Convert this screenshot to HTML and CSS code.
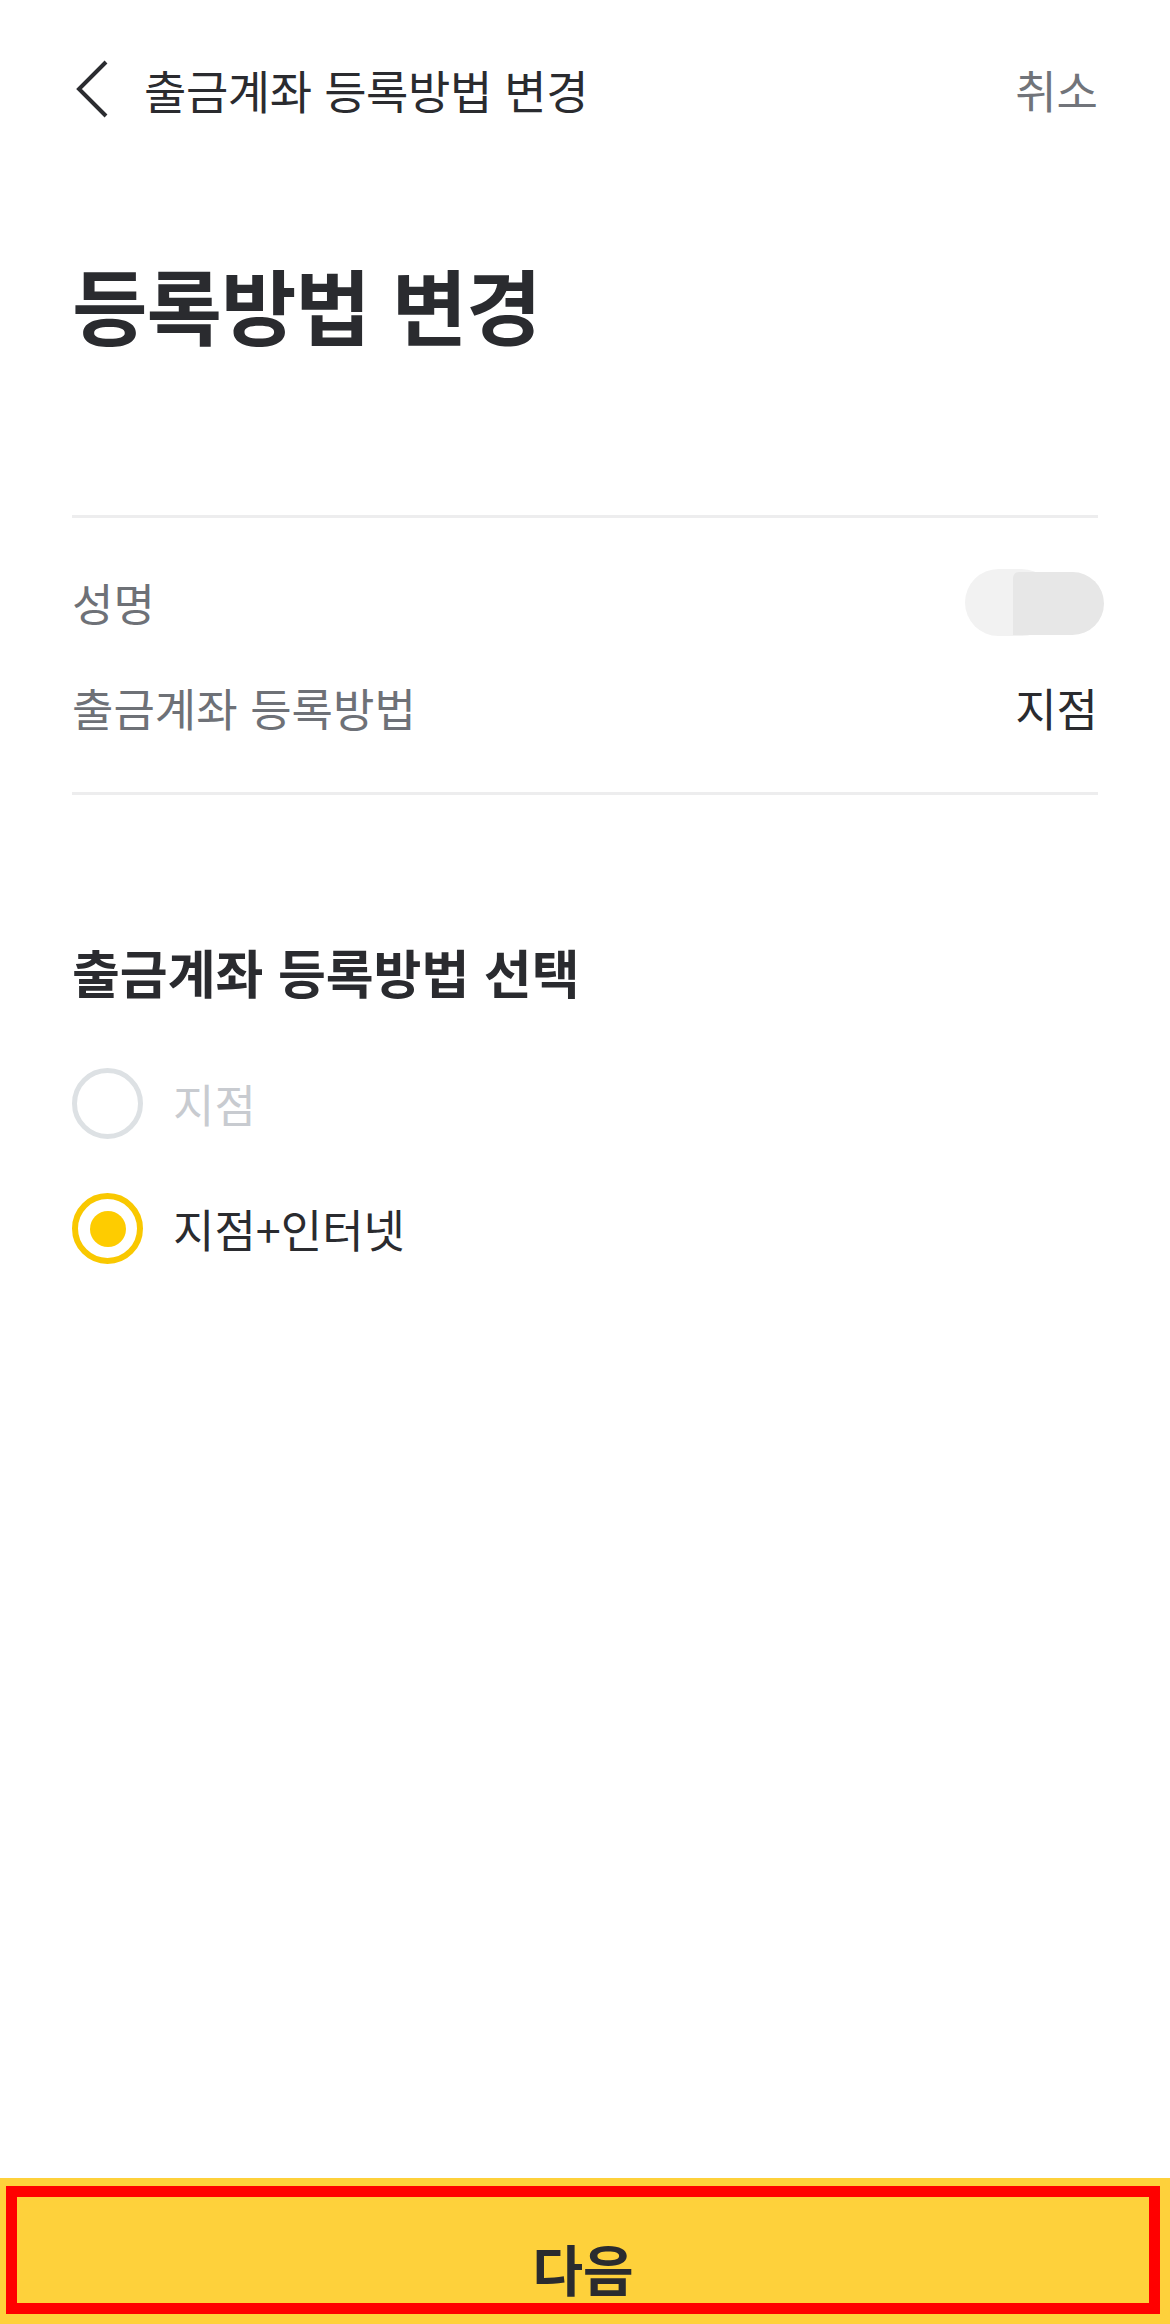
FILE: index.html
```html
<!DOCTYPE html>
<html lang="ko">
<head>
    <meta charset="UTF-8">
    <meta name="viewport" content="width=device-width, initial-scale=1.0">
    <title>출금계좌 등록방법 변경</title>
    <link rel="stylesheet" href="styles.css">
</head>
<body>
    <div class="page">
        <header class="top-bar">
            <button class="back-btn" aria-label="뒤로">
                <svg width="34" height="60" viewBox="0 0 34 60">
                    <polyline points="30,3 3,30 30,57" fill="none" stroke="#2b2c30" stroke-width="4" stroke-linejoin="miter"/>
                </svg>
            </button>
            <span class="top-title">출금계좌 등록방법 변경</span>
            <button class="cancel-btn">취소</button>
        </header>

        <main class="content">
            <h1 class="page-title">등록방법 변경</h1>

            <div class="info-list">
                <div class="info-row">
                    <span class="info-label">성명</span>
                    <span class="name-mask">
                        <span class="mask-left"></span>
                        <span class="mask-right"></span>
                    </span>
                </div>
                <div class="info-row">
                    <span class="info-label">출금계좌 등록방법</span>
                    <span class="info-value">지점</span>
                </div>
            </div>

            <h2 class="section-title">출금계좌 등록방법 선택</h2>

            <div class="radio-list">
                <label class="radio-row disabled">
                    <span class="radio"></span>
                    <span class="radio-text">지점</span>
                </label>
                <label class="radio-row checked">
                    <span class="radio"></span>
                    <span class="radio-text">지점+인터넷</span>
                </label>
            </div>
        </main>

        <div class="bottom-bar">
            <button class="next-btn">다음</button>
        </div>
    </div>
</body>
</html>
```

FILE: styles.css
```css
body {
    margin: 0;
    font-family: "Noto Sans CJK KR", "Noto Sans", sans-serif;
    color: #2a2b2f;
    background-color: #fff;
}

button {
    font-family: inherit;
    background: none;
    border: none;
    padding: 0;
    cursor: pointer;
}

.page {
    display: flex;
    flex-direction: column;
    min-height: 100vh;
}

/* header */
.top-bar {
    display: flex;
    align-items: center;
    height: 178px;
    padding: 0 72px 0 76px;
}

.back-btn {
    display: flex;
    width: 34px;
    height: 60px;
    margin-right: 34px;
}

.top-title {
    flex: 1;
    font-size: 46px;
    letter-spacing: -0.4px;
    color: #2a2b2f;
}

.cancel-btn {
    font-size: 45px;
    color: #71747a;
}

/* content */
.content {
    padding: 0 72px;
}

.page-title {
    margin: 77px 0 162px;
    font-size: 82px;
    line-height: 1.2;
    font-weight: bold;
    letter-spacing: -1px;
    color: #2a2b2f;
}

.info-list {
    border-top: 3px solid #ededee;
    border-bottom: 3px solid #ededee;
    padding: 32px 0;
}

.info-row {
    display: flex;
    align-items: center;
    justify-content: space-between;
    height: 105px;
}

.info-label {
    font-size: 45px;
    color: #6e7177;
}

.info-value {
    font-size: 45px;
    color: #2a2b2f;
}

.name-mask {
    display: flex;
    align-items: center;
    position: relative;
    width: 139px;
    height: 67px;
    margin-right: -6px;
}

.mask-left {
    position: absolute;
    left: 0;
    top: 0;
    width: 90px;
    height: 67px;
    border-radius: 34px;
    background-color: #f2f2f2;
}

.mask-right {
    position: absolute;
    left: 48px;
    top: 3px;
    width: 91px;
    height: 63px;
    border-radius: 6px 32px 32px 0;
    background-color: #e7e7e7;
}

.section-title {
    margin: 146px 0 38px;
    font-size: 52px;
    line-height: 62px;
    font-weight: bold;
    color: #2a2b2f;
}

.radio-row {
    display: flex;
    align-items: center;
    height: 125px;
}

.radio {
    box-sizing: border-box;
    display: flex;
    align-items: center;
    justify-content: center;
    width: 71px;
    height: 71px;
    margin-right: 30px;
    border-radius: 50%;
    border: 5px solid #dde1e4;
}

.radio-text {
    font-size: 45px;
    color: #2a2b2f;
}

.disabled .radio-text {
    color: #c8cbd0;
}

.checked .radio {
    border: 6px solid #f9c800;
}

.checked .radio::after {
    content: "";
    width: 36px;
    height: 36px;
    border-radius: 50%;
    background-color: #fecc00;
}

/* bottom button */
.bottom-bar {
    margin-top: auto;
    padding: 8px 10px 10px 6px;
    background-color: #fed13b;
}

.next-btn {
    box-sizing: border-box;
    display: block;
    width: 100%;
    height: 128px;
    padding-top: 30px;
    border: 11px solid #ff0000;
    font-size: 55px;
    font-weight: bold;
    color: #2a2b2f;
}
```
